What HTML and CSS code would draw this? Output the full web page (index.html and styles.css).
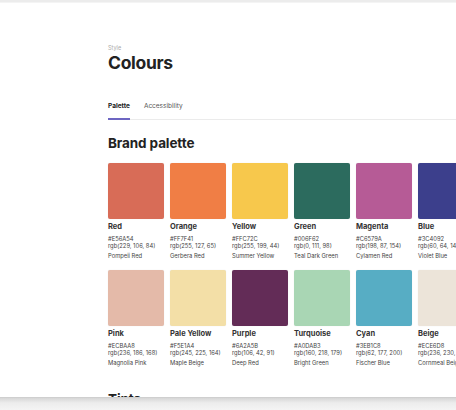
FILE: index.html
```html
<!DOCTYPE html>
<html>

  <head>
    <meta charset="UTF-8">
    <title>Colours</title>
    <link rel="stylesheet" href="styles.css">
  </head>

  <body>
    <div class="topbar"></div>
    <div class="page">
      <div class="header">
        <div class="eyebrow">Style</div>
        <h1 class="title">Colours</h1>
      </div>

      <div class="tabs">
        <span class="tab active">Palette</span>
        <span class="tab">Accessibility</span>
      </div>

      <h2 class="section">Brand palette</h2>

      <div class="grid">
        <div class="card">
          <div class="swatch" style="background:#d86c57"></div>
          <div class="name">Red</div>
          <div class="code">#E56A54<br>rgb(229, 106, 84)</div>
          <div class="alias">Pompeii Red</div>
        </div>
        <div class="card">
          <div class="swatch" style="background:#f07e45"></div>
          <div class="name">Orange</div>
          <div class="code">#FF7F41<br>rgb(255, 127, 65)</div>
          <div class="alias">Gerbera Red</div>
        </div>
        <div class="card">
          <div class="swatch" style="background:#f7c84c"></div>
          <div class="name">Yellow</div>
          <div class="code">#FFC72C<br>rgb(255, 199, 44)</div>
          <div class="alias">Summer Yellow</div>
        </div>
        <div class="card">
          <div class="swatch" style="background:#2c6b5e"></div>
          <div class="name">Green</div>
          <div class="code">#006F62<br>rgb(0, 111, 98)</div>
          <div class="alias">Teal Dark Green</div>
        </div>
        <div class="card">
          <div class="swatch" style="background:#b65b96"></div>
          <div class="name">Magenta</div>
          <div class="code">#C6579A<br>rgb(198, 87, 154)</div>
          <div class="alias">Cylamen Red</div>
        </div>
        <div class="card">
          <div class="swatch" style="background:#3c3f8c"></div>
          <div class="name">Blue</div>
          <div class="code">#3C4092<br>rgb(60, 64, 146)</div>
          <div class="alias">Violet Blue</div>
        </div>

        <div class="card">
          <div class="swatch" style="background:#e4baa9"></div>
          <div class="name">Pink</div>
          <div class="code">#ECBAA8<br>rgb(236, 186, 168)</div>
          <div class="alias">Magnolia Pink</div>
        </div>
        <div class="card">
          <div class="swatch" style="background:#f3dfa7"></div>
          <div class="name">Pale Yellow</div>
          <div class="code">#F5E1A4<br>rgb(245, 225, 164)</div>
          <div class="alias">Maple Beige</div>
        </div>
        <div class="card">
          <div class="swatch" style="background:#632c57"></div>
          <div class="name">Purple</div>
          <div class="code">#6A2A5B<br>rgb(106, 42, 91)</div>
          <div class="alias">Deep Red</div>
        </div>
        <div class="card">
          <div class="swatch" style="background:#a9d6b4"></div>
          <div class="name">Turquoise</div>
          <div class="code">#A0DAB3<br>rgb(160, 218, 179)</div>
          <div class="alias">Bright Green</div>
        </div>
        <div class="card">
          <div class="swatch" style="background:#57adc4"></div>
          <div class="name">Cyan</div>
          <div class="code">#3EB1C8<br>rgb(62, 177, 200)</div>
          <div class="alias">Fischer Blue</div>
        </div>
        <div class="card">
          <div class="swatch" style="background:#ece4d9"></div>
          <div class="name">Beige</div>
          <div class="code">#ECE6D8<br>rgb(236, 230, 216)</div>
          <div class="alias">Cornmeal Beige</div>
        </div>
      </div>

      <h2 class="section tints">Tints</h2>
    </div>
    <div class="bottom"></div>
  </body>

</html>
```

FILE: styles.css
```css
* {
  margin: 0;
  padding: 0;
  box-sizing: border-box;
}

html,
body {
  width: 456px;
  height: 410px;
  overflow: hidden;
  background: #fff;
  font-family: Inter, "Liberation Sans", sans-serif;
  color: #2a2a2a;
}

.topbar {
  height: 3px;
  background: #ececec;
  border-bottom: 1px solid #f4f4f4;
}

.page {
  height: 394px;
  padding: 41px 0 0 108px;
  overflow: hidden;
  background: #fff;
}

.eyebrow {
  font-size: 5.5px;
  color: #aaa;
  line-height: 8px;
}

.title {
  font-size: 17.5px;
  font-weight: 700;
  line-height: 22px;
  color: #222;
  letter-spacing: -0.3px;
}

.tabs {
  display: flex;
  gap: 14px;
  margin-top: 28px;
  border-bottom: 1px solid #ebebeb;
}

.tab {
  font-size: 6.5px;
  color: #555;
  padding-bottom: 8px;
  border-bottom: 2px solid transparent;
  margin-bottom: -1px;
}

.tab.active {
  font-weight: 700;
  color: #222;
  border-bottom-color: #6d66c2;
}

.section {
  font-size: 13.5px;
  font-weight: 700;
  line-height: 18px;
  color: #222;
  margin-top: 14px;
  letter-spacing: -0.1px;
}

.grid {
  display: grid;
  grid-template-columns: repeat(6, 56px);
  column-gap: 6px;
  row-gap: 10px;
  margin-top: 11px;
  width: 400px;
}

.swatch {
  width: 56px;
  height: 56px;
  border-radius: 2px;
  box-shadow: 0 0 1px rgba(0, 0, 0, 0.15);
}

.name {
  font-size: 7.5px;
  font-weight: 700;
  color: #333;
  margin-top: 3px;
  line-height: 10px;
}

.code {
  font-size: 5.8px;
  color: #444;
  line-height: 7px;
  margin-top: 3px;
  white-space: nowrap;
}

.alias {
  font-size: 5.8px;
  color: #444;
  line-height: 7.5px;
  margin-top: 3px;
  white-space: nowrap;
}

.tints {
  margin-top: 24px;
}

.bottom {
  height: 13px;
  background: linear-gradient(#d6d6d6, #ececec 40%, #f4f4f4);
  border-top: 1px solid #cfcfcf;
}
```
